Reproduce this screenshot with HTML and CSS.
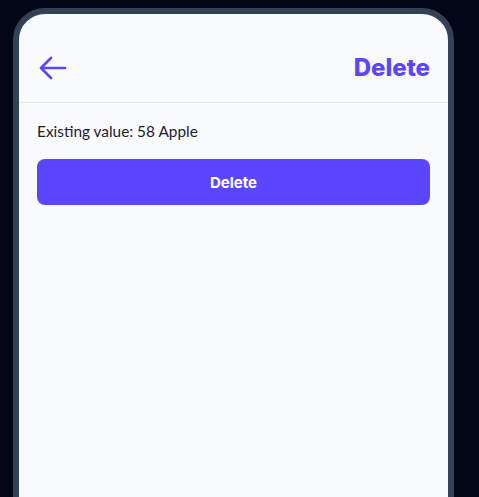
FILE: index.html
```html
<!DOCTYPE html>
<html lang="en">
<head>
<meta charset="utf-8">
<title>Delete</title>
<link rel="stylesheet" href="styles.css">
</head>
<body>
<div class="device">
  <div class="screen">
    <header class="header">
      <button class="back" aria-label="Back">
        <svg width="32" height="32" viewBox="0 0 24 24" fill="none" stroke="currentColor" stroke-width="2" stroke-linecap="round" stroke-linejoin="round"><path d="M10.5 19.5 3 12m0 0 7.5-7.5M3 12h18"/></svg>
      </button>
      <h1 class="title">Delete</h1>
    </header>
    <main class="content">
      <p class="existing">Existing value: 58 Apple</p>
      <button class="delete-btn">Delete</button>
    </main>
  </div>
</div>
</body>
</html>
```

FILE: styles.css
```css
html, body {
  margin: 0;
  padding: 0;
  background: #020617;
  height: 100%;
  overflow: hidden;
}
.device {
  margin: 8px 0 0 13px;
  width: 441px;
  height: 600px;
  box-sizing: border-box;
  border: 6px solid #334155;
  border-radius: 32px;
  background: #f8fafc;
  overflow: hidden;
}
.screen {
  display: flex;
  flex-direction: column;
}
.header {
  display: flex;
  align-items: center;
  justify-content: space-between;
  height: 89px;
  box-sizing: border-box;
  padding: 38px 18px 19px 18px;
  border-bottom: 1px solid #e2e8f0;
}
.back {
  display: flex;
  padding: 0;
  margin: 0;
  border: none;
  background: none;
  color: #5b46ff;
}
.title {
  margin: 0;
  font-family: Inter, "Liberation Sans", sans-serif;
  font-weight: 800;
  font-size: 24px;
  line-height: 32px;
  color: #5b46ff;
}
.content {
  display: flex;
  flex-direction: column;
  gap: 18px;
  padding: 18px 18px;
}
.existing {
  margin: 0;
  font-family: Lato, "Noto Sans", sans-serif;
  font-size: 15.4px;
  line-height: 20px;
  color: #1e1b2e;
}
.delete-btn {
  height: 46px;
  border: none;
  border-radius: 8px;
  background: #5b46ff;
  color: #ffffff;
  font-family: Inter, "Liberation Sans", sans-serif;
  font-weight: 700;
  font-size: 15px;
}
```
